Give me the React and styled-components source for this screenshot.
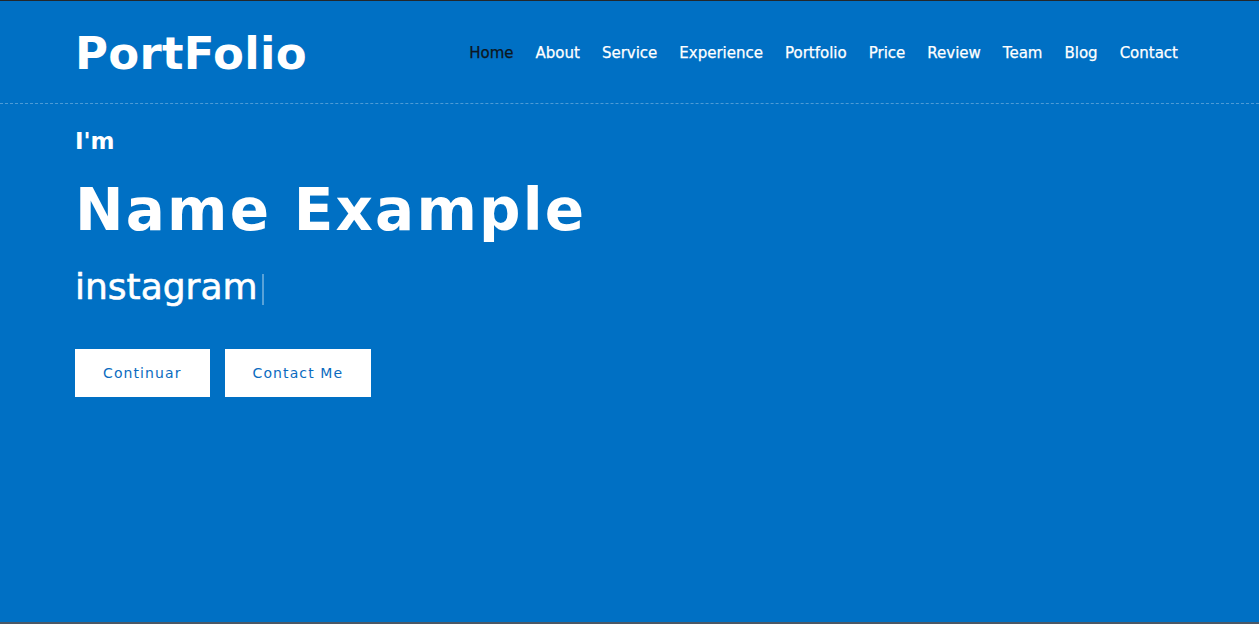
import React from "react";
import styled, { createGlobalStyle } from "styled-components";

const GlobalStyle = createGlobalStyle`
  * { box-sizing: border-box; }
  body {
    margin: 0;
    font-family: "DejaVu Sans", "Open Sans", sans-serif;
  }
`;

const links = ["Home", "About", "Service", "Experience", "Portfolio", "Price", "Review", "Team", "Blog", "Contact"];

const App = () => {
  return (
    <Page>
      <GlobalStyle />
      <Header>
        <Logo>PortFolio</Logo>
        <Nav>
          {links.map((l, i) => (
            <NavLink key={l} active={i === 0}>{l}</NavLink>
          ))}
        </Nav>
      </Header>
      <Hero>
        <Intro>I'm</Intro>
        <Name>Name Example</Name>
        <Typed>
          instagram<Caret />
        </Typed>
        <Buttons>
          <Button>Continuar</Button>
          <Button>Contact Me</Button>
        </Buttons>
      </Hero>
    </Page>
  );
};

const Page = styled.div`
  height: 100vh;
  background: #0070c4;
  border-top: 1px solid #23272b;
  border-bottom: 2px solid #4b5866;
  color: #fff;
`;

const Header = styled.header`
  height: 103px;
  display: flex;
  align-items: center;
  justify-content: space-between;
  padding: 0 81px 0 75px;
  border-bottom: 1px dashed rgba(255, 255, 255, 0.3);
`;

const Logo = styled.div`
  font-size: 45px;
  font-weight: 700;
  letter-spacing: 0.3px;
  margin-top: 2px;
`;

const Nav = styled.nav`
  display: flex;
  gap: 22px;
  margin-top: 1px;
`;

const NavLink = styled.a`
  font-size: 15px;
  font-weight: 500;
  -webkit-text-stroke: 0.25px currentColor;
  color: ${(p) => (p.active ? "#0d1620" : "#fff")};
  cursor: pointer;
`;

const Hero = styled.section`
  padding: 20px 75px 0;
`;

const Intro = styled.div`
  font-size: 23px;
  font-weight: 700;
  line-height: 34px;
`;

const Name = styled.h1`
  margin: 12px 0 0;
  font-size: 58px;
  font-weight: 700;
  letter-spacing: 2.2px;
  line-height: 80px;
`;

const Typed = styled.div`
  margin-top: 12px;
  font-size: 36px;
  font-weight: 500;
  -webkit-text-stroke: 0.6px #fff;
  line-height: 50px;
  display: flex;
  align-items: center;
`;

const Caret = styled.span`
  display: inline-block;
  width: 2px;
  height: 31px;
  margin-left: 4px;
  margin-top: 4px;
  background: rgba(255, 255, 255, 0.35);
`;

const Buttons = styled.div`
  display: flex;
  gap: 15px;
  margin-top: 37px;
`;

const Button = styled.button`
  height: 48px;
  padding: 0 28px;
  border: none;
  background: #fff;
  color: #0a6bc0;
  font-family: inherit;
  font-size: 14px;
  font-weight: 500;
  letter-spacing: 1.1px;
  cursor: pointer;
`;

export default App;
